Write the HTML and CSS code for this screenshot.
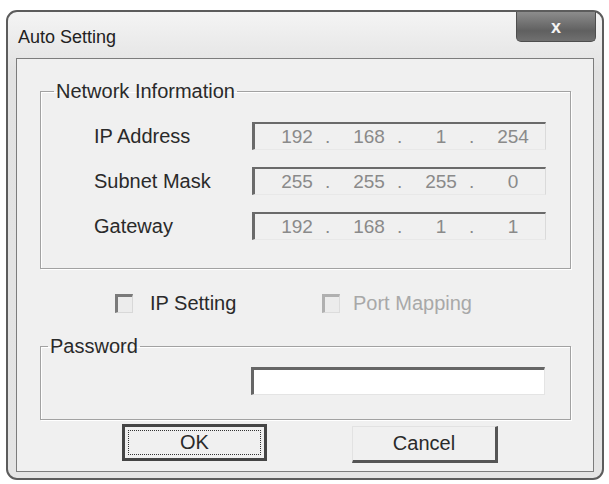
FILE: index.html
```html
<!DOCTYPE html>
<html lang="en">
<head>
    <meta charset="UTF-8">
    <meta name="viewport" content="width=device-width, initial-scale=1.0">
    <title>Auto Setting</title>
    <link rel="stylesheet" href="styles.css">
</head>
<body>
    <div class="window">
        <div class="titlebar">
            <span class="title">Auto Setting</span>
            <button class="close">x</button>
        </div>
        <div class="client">
            <fieldset class="group network">
                <legend>Network Information</legend>
                <div class="row">
                    <span class="label">IP Address</span>
                    <div class="ip-field">
                        <span class="seg">192</span><span class="dot">.</span>
                        <span class="seg">168</span><span class="dot">.</span>
                        <span class="seg">1</span><span class="dot">.</span>
                        <span class="seg">254</span>
                    </div>
                </div>
                <div class="row">
                    <span class="label">Subnet Mask</span>
                    <div class="ip-field">
                        <span class="seg">255</span><span class="dot">.</span>
                        <span class="seg">255</span><span class="dot">.</span>
                        <span class="seg">255</span><span class="dot">.</span>
                        <span class="seg">0</span>
                    </div>
                </div>
                <div class="row">
                    <span class="label">Gateway</span>
                    <div class="ip-field">
                        <span class="seg">192</span><span class="dot">.</span>
                        <span class="seg">168</span><span class="dot">.</span>
                        <span class="seg">1</span><span class="dot">.</span>
                        <span class="seg">1</span>
                    </div>
                </div>
            </fieldset>

            <div class="checks">
                <label class="check"><span class="box"></span>IP Setting</label>
                <label class="check disabled"><span class="box"></span>Port Mapping</label>
            </div>

            <fieldset class="group password">
                <legend>Password</legend>
                <div class="pw-input"></div>
            </fieldset>

            <div class="buttons">
                <button class="btn default"><span class="focus">OK</span></button>
                <button class="btn">Cancel</button>
            </div>
        </div>
    </div>
</body>
</html>
```

FILE: styles.css
```css
body {
    margin: 0;
    padding: 0;
    background: #fff;
    font-family: "Liberation Sans", Arial, sans-serif;
    color: #2a2a2a;
}
.window {
    box-sizing: border-box;
    width: 598px;
    height: 470px;
    margin: 10px 0 0 6px;
    border: 2px solid #5c5c5c;
    border-radius: 11px;
    background: linear-gradient(#f4f4f4, #e2e2e2 60px, #e4e4e4);
    display: flex;
    flex-direction: column;
}
.titlebar {
    height: 46px;
    display: flex;
    justify-content: space-between;
    align-items: flex-start;
    padding-left: 10px;
}
.title {
    font-size: 18px;
    margin-top: 15px;
    color: #222;
}
.close {
    width: 80px;
    height: 30px;
    margin-right: 6px;
    border: 1px solid #4e4e4e;
    border-top: none;
    border-radius: 0 0 5px 5px;
    background: linear-gradient(#8c8c8c, #606060 65%, #707070);
    color: #f4f4f4;
    font-family: "Liberation Sans", Arial, sans-serif;
    font-weight: bold;
    font-size: 18px;
    line-height: 22px;
    padding: 0;
}
.client {
    flex: 1;
    margin: 0 8px 6px 8px;
    border: 1px solid #7c7c7c;
    background: #f0f0f0;
    padding-top: 22px;
}
.group {
    margin: 0 22px 0 23px;
    padding: 0;
    border: 1px solid #a2a2a2;
    box-shadow: inset 1px 1px 0 #fff, 1px 1px 0 #fff;
}
.group legend {
    font-size: 20px;
    line-height: 20px;
    padding: 0 2px;
}
.network legend {
    margin-left: 13px;
}
.network {
    padding: 21px 0 28px 0;
    display: flex;
    flex-direction: column;
    gap: 17px;
}
.row {
    display: flex;
    align-items: center;
    height: 28px;
}
.label {
    width: 158px;
    padding-left: 53px;
    font-size: 20px;
}
.ip-field {
    box-sizing: border-box;
    width: 294px;
    height: 28px;
    display: flex;
    align-items: center;
    padding-left: 14px;
    border-top: 2px solid #6a6a6a;
    border-left: 3px solid #6a6a6a;
    border-right: 1px solid #dadada;
    border-bottom: 1px solid #e8e8e8;
    color: #8a8a8a;
    font-size: 19px;
}
.seg {
    width: 56px;
    text-align: center;
}
.dot {
    width: 16px;
    text-align: left;
}
.checks {
    display: flex;
    height: 20px;
    align-items: center;
    margin-top: 24px;
    padding-left: 98px;
    font-size: 20px;
}
.check {
    display: flex;
    align-items: center;
    width: 207px;
}
.box {
    box-sizing: border-box;
    width: 18px;
    height: 19px;
    margin-right: 17px;
    border-top: 3px solid #7a7a7a;
    border-left: 3px solid #7a7a7a;
    border-right: 1px solid #d8d8d8;
    border-bottom: 1px solid #d8d8d8;
    background: #ececec;
}
.check.disabled {
    color: #a8a8a8;
}
.check.disabled .box {
    border-color: #b0b0b0 #dcdcdc #dcdcdc #b0b0b0;
    margin-right: 13px;
}
.password {
    margin-top: 23px;
    padding: 11px 0 24px 0;
}
.password legend {
    margin-left: 7px;
}
.pw-input {
    box-sizing: border-box;
    width: 294px;
    height: 28px;
    margin-left: 210px;
    background: #fff;
    border-top: 3px solid #666;
    border-left: 3px solid #666;
    border-right: 1px solid #e4e4e4;
    border-bottom: 1px solid #e4e4e4;
}
.buttons {
    display: flex;
    gap: 85px;
    margin-top: 4px;
    padding-left: 105px;
}
.btn {
    box-sizing: border-box;
    width: 146px;
    height: 37px;
    background: #f0f0f0;
    font-family: "Liberation Sans", Arial, sans-serif;
    font-size: 20px;
    color: #2a2a2a;
    padding: 0;
    border-top: 1px solid #e2e2e2;
    border-left: 1px solid #e2e2e2;
    border-right: 3px solid #555;
    border-bottom: 3px solid #555;
    margin-top: 2px;
}
.btn.default {
    width: 145px;
    border: 3px solid #454545;
    padding: 3px;
    margin-top: 0;
}
.focus {
    display: flex;
    align-items: center;
    justify-content: center;
    height: 100%;
    border: 1px dotted #333;
    box-sizing: border-box;
}
```
